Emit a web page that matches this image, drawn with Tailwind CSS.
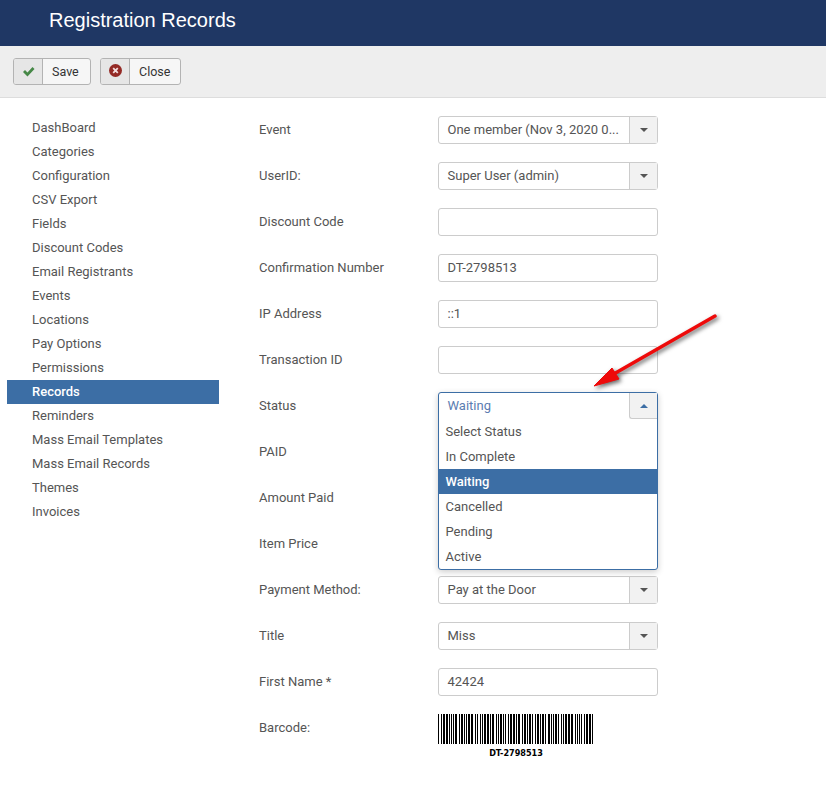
<!DOCTYPE html>
<html lang="en">
<head>
    <meta charset="UTF-8">
    <title>Registration Records</title>
    <script src="https://cdn.jsdelivr.net/npm/@tailwindcss/browser@4"></script>
</head>
<body class="relative h-[794px] overflow-hidden bg-white font-['Roboto',sans-serif] text-[13px] text-[#555]">
<header class="h-[46px] bg-[#1f3764] pl-[49px] pt-[7px]">
    <h1 class="font-['Liberation_Sans',sans-serif] text-[20px] leading-[27px] text-white">Registration Records</h1>
</header>

<div class="flex h-[52px] gap-[9px] border-b border-[#dddddd] bg-[#eeeeee] pl-[13px] pt-[12px]">
    <button class="flex h-[27px] w-[78px] overflow-hidden rounded-[3px] border border-[#b3b3b3] bg-[#f6f6f6]">
        <span class="flex h-full w-[29px] items-center justify-center border-r border-[#b3b3b3] bg-[#e6e6e6]">
            <svg width="13" height="11" viewBox="0 0 13 11"><path d="M1 6l2-2 2.500 2.500L10.500 1l2 2-7 7.500z" fill="#468847"/></svg>
        </span>
        <span class="pl-[9px] text-[12.500px] leading-[26px] text-[#333]">Save</span>
    </button>
    <button class="flex h-[27px] w-[81px] overflow-hidden rounded-[3px] border border-[#b3b3b3] bg-[#f6f6f6]">
        <span class="flex h-full w-[29px] items-center justify-center border-r border-[#b3b3b3] bg-[#e6e6e6]">
            <svg class="-mt-[2px]" width="13" height="13" viewBox="0 0 13 13"><circle cx="6.500" cy="6.500" r="6.500" fill="#942a25"/><path d="M4.200 4.200l4.600 4.600M8.800 4.200l-4.600 4.600" stroke="#f4dede" stroke-width="1.800"/></svg>
        </span>
        <span class="pl-[9px] text-[12.500px] leading-[26px] text-[#333]">Close</span>
    </button>
</div>

<main class="flex">
    <nav class="w-[219px] shrink-0 pl-[7px] pt-[18px] leading-[24px]">
        <a class="block h-6 pl-[25px]">DashBoard</a>
        <a class="block h-6 pl-[25px]">Categories</a>
        <a class="block h-6 pl-[25px]">Configuration</a>
        <a class="block h-6 pl-[25px]">CSV Export</a>
        <a class="block h-6 pl-[25px]">Fields</a>
        <a class="block h-6 pl-[25px]">Discount Codes</a>
        <a class="block h-6 pl-[25px]">Email Registrants</a>
        <a class="block h-6 pl-[25px]">Events</a>
        <a class="block h-6 pl-[25px]">Locations</a>
        <a class="block h-6 pl-[25px]">Pay Options</a>
        <a class="block h-6 pl-[25px]">Permissions</a>
        <a class="block h-6 bg-[#3c6ea5] pl-[25px] font-medium text-white">Records</a>
        <a class="block h-6 pl-[25px]">Reminders</a>
        <a class="block h-6 pl-[25px]">Mass Email Templates</a>
        <a class="block h-6 pl-[25px]">Mass Email Records</a>
        <a class="block h-6 pl-[25px]">Themes</a>
        <a class="block h-6 pl-[25px]">Invoices</a>
    </nav>

    <form class="flex flex-col gap-[18px] pl-[40px] pt-[18px] leading-[28px]">
        <div class="flex h-7">
            <label class="w-[179px]">Event</label>
            <div class="flex h-7 w-[220px] rounded-[3px] border border-[#cccccc] leading-[26px]">
                <span class="flex-1 pl-[8.500px]">One member (Nov 3, 2020 0...</span>
                <span class="flex w-7 items-center justify-center border-l border-[#cccccc] bg-[#f2f2f2]"><span class="border-x-4 border-t-4 border-x-transparent border-t-[#555]"></span></span>
            </div>
        </div>
        <div class="flex h-7">
            <label class="w-[179px]">UserID:</label>
            <div class="flex h-7 w-[220px] rounded-[3px] border border-[#cccccc] leading-[26px]">
                <span class="flex-1 pl-[8.500px]">Super User (admin)</span>
                <span class="flex w-7 items-center justify-center border-l border-[#cccccc] bg-[#f2f2f2]"><span class="border-x-4 border-t-4 border-x-transparent border-t-[#555]"></span></span>
            </div>
        </div>
        <div class="flex h-7">
            <label class="w-[179px]">Discount Code</label>
            <div class="h-7 w-[220px] rounded-[3px] border border-[#cccccc]"></div>
        </div>
        <div class="flex h-7">
            <label class="w-[179px]">Confirmation Number</label>
            <div class="h-7 w-[220px] rounded-[3px] border border-[#cccccc] pl-[8.500px] leading-[26px]">DT-2798513</div>
        </div>
        <div class="flex h-7">
            <label class="w-[179px]">IP Address</label>
            <div class="h-7 w-[220px] rounded-[3px] border border-[#cccccc] pl-[8.500px] leading-[26px]">::1</div>
        </div>
        <div class="flex h-7">
            <label class="w-[179px]">Transaction ID</label>
            <div class="h-7 w-[220px] rounded-[3px] border border-[#cccccc]"></div>
        </div>
        <div class="flex h-7">
            <label class="w-[179px]">Status</label>
            <div class="relative z-10 h-[178px] w-[220px] rounded-[3px] border border-[#3c6ea5] bg-white shadow-[0_2px_6px_rgba(0,0,0,0.2)]">
                <div class="flex h-[26px] leading-[26px]">
                    <span class="flex-1 pl-[8.500px] text-[#5b7db1]">Waiting</span>
                    <span class="flex w-7 items-center justify-center rounded-bl-[3px] border-b border-l border-[#cccccc] bg-[#f2f2f2]"><span class="border-x-4 border-b-4 border-x-transparent border-b-[#3c6ea5]"></span></span>
                </div>
                <ul class="leading-[25px]">
                    <li class="h-[25px] pl-[6.500px]">Select Status</li>
                    <li class="h-[25px] pl-[6.500px]">In Complete</li>
                    <li class="h-[25px] bg-[#3c6ea5] pl-[6.500px] font-medium text-white">Waiting</li>
                    <li class="h-[25px] pl-[6.500px]">Cancelled</li>
                    <li class="h-[25px] pl-[6.500px]">Pending</li>
                    <li class="h-[25px] pl-[6.500px]">Active</li>
                </ul>
            </div>
        </div>
        <div class="flex h-7"><label class="w-[179px]">PAID</label></div>
        <div class="flex h-7"><label class="w-[179px]">Amount Paid</label></div>
        <div class="flex h-7"><label class="w-[179px]">Item Price</label></div>
        <div class="flex h-7">
            <label class="w-[179px]">Payment Method:</label>
            <div class="flex h-7 w-[220px] rounded-[3px] border border-[#cccccc] leading-[26px]">
                <span class="flex-1 pl-[8.500px]">Pay at the Door</span>
                <span class="flex w-7 items-center justify-center border-l border-[#cccccc] bg-[#f2f2f2]"><span class="border-x-4 border-t-4 border-x-transparent border-t-[#555]"></span></span>
            </div>
        </div>
        <div class="flex h-7">
            <label class="w-[179px]">Title</label>
            <div class="flex h-7 w-[220px] rounded-[3px] border border-[#cccccc] leading-[26px]">
                <span class="flex-1 pl-[8.500px]">Miss</span>
                <span class="flex w-7 items-center justify-center border-l border-[#cccccc] bg-[#f2f2f2]"><span class="border-x-4 border-t-4 border-x-transparent border-t-[#555]"></span></span>
            </div>
        </div>
        <div class="flex h-7">
            <label class="w-[179px]">First Name *</label>
            <div class="h-7 w-[220px] rounded-[3px] border border-[#cccccc] pl-[8.500px] leading-[26px]">42424</div>
        </div>
        <div class="flex h-7">
            <label class="w-[179px]">Barcode:</label>
            <div class="w-[156px]">
                <svg class="block" width="156" height="30" shape-rendering="crispEdges"><path id="bars" fill="#000"></path></svg>
                <div class="mt-[3px] text-center font-['Liberation_Sans_Narrow','DejaVu_Sans_Condensed',sans-serif] text-[9px] font-bold leading-[12px] text-black">DT-2798513</div>
            </div>
        </div>
    </form>
</main>

<!-- arrow sits on top of the form -->
<svg class="absolute left-[585px] top-[305px] z-20 drop-shadow-[2px_2px_2px_rgba(0,0,0,0.6)]" width="140" height="90" viewBox="585 305 140 90">
    <path d="M715 316L612 375" stroke="#ee0a0a" stroke-width="3.500" stroke-linecap="round"/>
    <path d="M594 386L612 368L619 379z" fill="#ee0a0a" stroke="#ee0a0a" stroke-width="1" stroke-linejoin="round"/>
</svg>

<script>
    // code 39 bars for *DT-2798513*, 13 modules a character
    var chars = ["100101101101", "101011001011", "101011011001", "100101011011", "101100101011", "101001011011",
        "101100101101", "110100101101", "110100110101", "110100101011", "110110010101", "100101101101"];
    var bits = chars.join("0");
    var d = "";
    for (var i = 0; i < bits.length; i++) {
        if (bits[i] === "1") d += "M" + i + " 0h1v30h-1z";
    }
    document.getElementById("bars").setAttribute("d", d);
</script>
</body>
</html>
